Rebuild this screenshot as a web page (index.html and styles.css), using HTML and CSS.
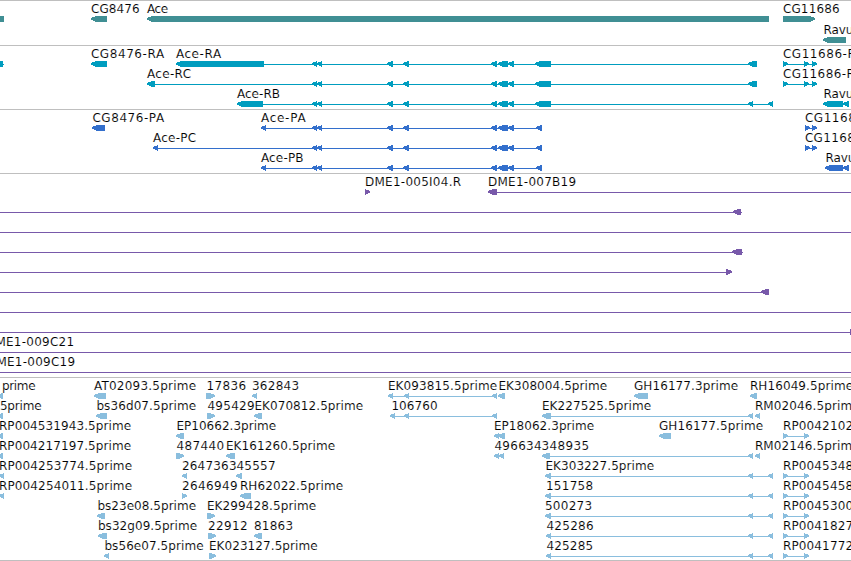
FILE: index.html
```html
<!DOCTYPE html>
<html lang="en">
<head>
<meta charset="utf-8">
<title>Genome browser</title>
<link rel="stylesheet" href="styles.css">
</head>
<body>
<main class="browser">
  <section class="track track-gene" id="gene"></section>
  <section class="track track-rna" id="rna"></section>
  <section class="track track-protein" id="protein"></section>
  <section class="track track-clone" id="clone"></section>
  <section class="track track-est" id="est"></section>
</main>
<script src="script.js"></script>
</body>
</html>
```
FILE: styles.css
```css
body {
  margin: 0;
  background: #fff;
}

.browser {
  display: flex;
  flex-direction: column;
  width: 851px;
  height: 561px;
  overflow: hidden;
}

.track {
  display: flex;
  flex-direction: column;
  flex: none;
  border-top: 1px solid #bfbfbf;
  padding-bottom: 3px;
}

.row {
  display: block;
  flex: none;
  width: 851px;
  height: 20px;
  overflow: visible;
}

.row text {
  font-family: "DejaVu Sans", sans-serif;
  font-size: 12px;
  fill: #000;
  stroke: #fff;
  stroke-width: 0.12px;
}

.row path,
.row rect {
  fill: var(--feature);
  shape-rendering: crispEdges;
}

.track-gene {
  --feature: #408f94;
  padding-bottom: 2px;
}

.track-gene .row {
  height: 21px;
}

.track-rna {
  --feature: #009dbf;
}

.track-protein {
  --feature: #336fcc;
}

.track-clone {
  --feature: #7859aa;
}

.track-est {
  --feature: #8abede;
  padding-bottom: 2px;
  border-bottom: 1px solid #bfbfbf;
}
```
FILE: script.js
```js
// Row: { t: [[label, start, end], ...], g: "<start,end >start,end -start,end" }
// "<" and ">" are stranded exons, "-" is an intron line, "#" a block with no head.
const exons = "<312,317 <317,322 <387,393 <403,409 <491,497 <498,508 <508,514";
const fwd = "-783,809 >783,788 >804,809";
const tail = "<748,753 <768,773";

const tracks = {
  gene: [
    { t: [["CG8476", 91.5, 139], ["Ace", 147.5, 167.5], ["CG11686", 783.5, 839]],
      g: "-0,4 #0,4 <91,107 <147,769 >783,815" },
    { t: [["Ravus", 824, 859]], g: "<823,846" }
  ],
  rna: [
    { t: [["CG8476-RA", 91.5, 163.5], ["Ace-RA", 176.5, 220.5], ["CG11686-RA", 783.5, 863.5]],
      g: "-0,4 #0,3 <91,107 -176,757 <176,264 " + exons + " <535,551 <748,757 -783,817 >783,788 >804,809 >812,817" },
    { t: [["Ace-RC", 147.5, 190.5], ["CG11686-RB", 783.5, 863]],
      g: "-147,757 <147,155 " + exons + " <535,551 <748,757 -783,817 >783,788 >804,809 >812,817" },
    { t: [["Ace-RB", 237.5, 279.5], ["Ravus", 824, 859]],
      g: "-237,773 <237,263 " + exons + " <535,551 " + tail + " -823,849 <823,843 <843,849" }
  ],
  protein: [
    { t: [["CG8476-PA", 93, 163.5], ["Ace-PA", 261.5, 305], ["CG11686-PA", 805.5, 884]],
      g: "<92,105 -261,542 <261,266 " + exons + " <536,542 -805,817 >805,810 >812,817" },
    { t: [["Ace-PC", 153.5, 195.5], ["CG11686-PB", 805.5, 883]],
      g: "-153,542 <153,158 " + exons + " <536,542 -805,817 >805,810 >812,817" },
    { t: [["Ace-PB", 261.5, 303], ["Ravus", 826, 861]],
      g: "-261,542 <261,266 " + exons + " <536,542 -825,849 <825,843 <843,849" }
  ],
  clone: [
    { t: [["DME1-005I04.R", 365.5, 460.5], ["DME1-007B19", 488.5, 575.5]], g: ">365,370 <488,497 -488,851" },
    { t: [], g: "-0,742 <733,741" },
    { t: [], g: "-0,851" },
    { t: [], g: "-0,743 <732,742" },
    { t: [], g: "-0,732 >726,732" },
    { t: [], g: "-0,769 <761,769" },
    { t: [], g: "-0,851" },
    { t: [], g: "-0,851 >850,860" },
    { t: [["DME1-009C21", -13.5, 73.5]], g: "-0,851" },
    { t: [["DME1-009C19", -12.5, 74.5]], g: "-0,851" }
  ],
  est: [
    { t: [["prime", 2.5, 35], ["AT02093.5prime", 94.5, 195.5], ["17836", 207, 245.5], ["362843", 252.5, 298.5],
          ["EK093815.5prime", 388.5, 496.5], ["EK308004.5prime", 499, 606.5],
          ["GH16177.3prime", 634.5, 737.5], ["RH16049.5prime", 750.5, 852.5]],
      g: "<-3,3 <94,106 >206,215 <252,257 -388,497 <388,393 <404,409 <492,497 <498,505 <634,648 <750,757" },
    { t: [["5prime", 0.5, 41], ["bs36d07.5prime", 97, 195.5], ["495429", 208, 254], ["EK070812.5prime", 255, 362.5],
          ["106760", 392, 437], ["EK227525.5prime", 542.5, 650.5], ["RM02046.5prime", 755.5, 859]],
      g: "<-3,3 <96,107 >207,215 <254,262 -390,497 <390,395 <404,409 <492,497 -542,753 <542,551 <748,753 <755,760" },
    { t: [["RP004531943.5prime", -0.5, 130.5], ["EP10662.3prime", 177, 275.5], ["EP18062.3prime", 494.5, 593.5],
          ["GH16177.5prime", 659.5, 762.5], ["RP0042102", 783.5, 852.5]],
      g: "<-3,3 <176,184 <494,499 <498,505 <659,671 " + fwd },
    { t: [["RP004217197.5prime", -0.5, 130.5], ["487440", 177, 223.5], ["EK161260.5prime", 226.5, 334.5],
          ["496634", 495, 541], ["348935", 542, 588.5], ["RM02146.5prime", 755.5, 859]],
      g: "<-3,3 >176,184 <226,235 <494,499 <499,504 -542,753 <542,550 <748,753 <755,760" },
    { t: [["RP004253774.5prime", -0.5, 131.5], ["2647363", 182.5, 236], ["45557", 237, 275],
          ["EK303227.5prime", 546, 653.5], ["RP0045348", 783.5, 852.5]],
      g: "<-1,4 <182,187 <236,242 -545,773 <545,551 " + tail + " " + fwd },
    { t: [["RP004254011.5prime", -0.5, 131.5], ["2646949", 182.5, 237], ["RH62022.5prime", 240.5, 342.5],
          ["151758", 546.5, 592.5], ["RP0045458", 783.5, 852.5]],
      g: "<-1,4 >182,187 <240,251 -545,773 <545,551 " + tail + " " + fwd },
    { t: [["bs23e08.5prime", 98, 195.5], ["EK299428.5prime", 207.5, 315.5], ["500273", 545.5, 591.5], ["RP0045300", 783.5, 852.5]],
      g: "<97,105 >207,215 -545,773 <545,551 " + tail + " " + fwd },
    { t: [["bs32g09.5prime", 98.5, 196.5], ["22912", 208.5, 247], ["81863", 254.5, 292.5], ["425286", 547, 593], ["RP0041827", 783.5, 852.5]],
      g: "<98,107 >208,216 <254,262 -546,773 <546,551 " + tail + " " + fwd },
    { t: [["bs56e07.5prime", 105, 203], ["EK023127.5prime", 209.5, 317], ["425285", 547, 592.5], ["RP0041772", 783.5, 852.5]],
      g: "<104,109 >209,216 -546,773 <546,551 " + tail + " " + fwd }
  ]
};

function feature(token) {
  const [a, b] = token.slice(1).split(",").map(Number);
  const kind = token[0];
  const head = Math.min(5, b - a);
  if (kind === "-") return `<rect x="${a}" y="18" width="${b - a}" height="1"/>`;
  if (kind === "#") return `<rect x="${a}" y="15" width="${b - a}" height="6"/>`;
  if (kind === "<") return `<path d="M${a} 17L${a + head} 15H${b}V21H${a + head}L${a} 18.6Z"/>`;
  return `<path d="M${b} 17L${b - head} 15H${a}V21H${b - head}L${b} 18.6Z"/>`;
}

function label([text, start, end]) {
  return `<text x="${start - 0.6}" y="12" textLength="${end - start + 1.2}">${text}</text>`;
}

for (const [id, rows] of Object.entries(tracks)) {
  document.getElementById(id).innerHTML = rows.map(row =>
    `<svg class="row">${row.g.split(" ").map(feature).join("")}${row.t.map(label).join("")}</svg>`
  ).join("");
}
```
